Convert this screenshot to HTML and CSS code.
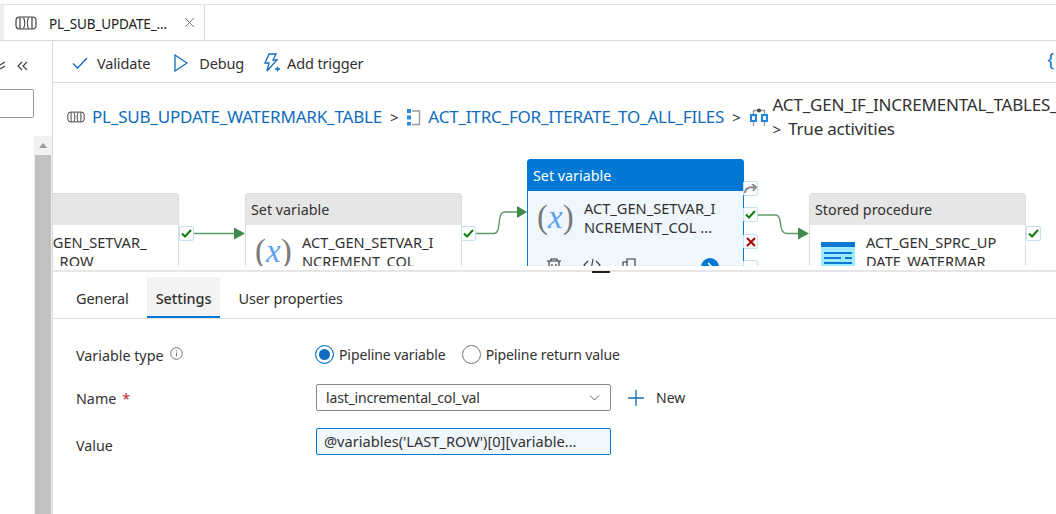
FILE: index.html
```html
<!DOCTYPE html>
<html lang="en">
<head>
    <meta charset="UTF-8">
    <title>PL_SUB_UPDATE_WATERMARK_TABLE</title>
    <link rel="stylesheet" href="styles.css">
</head>
<body>
    <div class="tabbar">
        <div class="tab-sliver"></div>
        <div class="tab">
            <svg class="pipe-icon" width="22" height="14" viewBox="0 0 22 14"><rect x="1" y="1" width="20" height="12" rx="3.500"/><path d="M5 1v12M17 1v12M8.500 1.500c1.500 3 1.500 8 0 11M13.500 1.500c-1.500 3-1.500 8 0 11"/></svg>
            <span class="tab-title">PL_SUB_UPDATE_...</span>
            <svg class="tab-close" width="11" height="11" viewBox="0 0 11 11"><path d="M1 1l9 9M10 1l-9 9"/></svg>
        </div>
    </div>

    <div class="workspace">
        <aside class="side">
            <div class="side-top">
                <svg width="8" height="10" viewBox="0 0 8 10" class="side-cut"><path d="M0 4l5-3M0 8l5-3"/></svg>
                <svg width="11" height="10" viewBox="0 0 11 10" class="side-collapse"><path d="M5 1L1 5l4 4M10 1L6 5l4 4"/></svg>
            </div>
            <div class="side-search"></div>
            <div class="scrollbar">
                <svg width="8" height="5" viewBox="0 0 8 5"><path d="M0 5l4-5 4 5z"/></svg>
                <div class="scroll-thumb"></div>
            </div>
        </aside>

        <main class="main">
            <div class="toolbar">
                <div class="tool">
                    <svg width="16" height="12" viewBox="0 0 16 12"><path d="M1 6.500l4.500 4.500L15 1"/></svg>
                    <span>Validate</span>
                </div>
                <div class="tool tool-debug">
                    <svg width="14" height="18" viewBox="0 0 14 18"><path d="M1 1l12 8L1 17z"/></svg>
                    <span>Debug</span>
                </div>
                <div class="tool tool-trigger">
                    <svg width="17" height="20" viewBox="0 0 17 20"><path d="M6 1h7l-3 6h4L4 18l2-8H2z"/><path d="M12 16h5M14.500 13.500v5"/></svg>
                    <span>Add trigger</span>
                </div>
                <span class="tool-brace">{</span>
            </div>

            <div class="crumbs">
                <svg class="pipe-icon" width="18" height="12" viewBox="0 0 22 14"><rect x="1" y="1" width="20" height="12" rx="3.500"/><path d="M5 1v12M17 1v12M8.500 1.500c1.500 3 1.500 8 0 11M13.500 1.500c-1.500 3-1.500 8 0 11"/></svg>
                <a class="crumb-link">PL_SUB_UPDATE_WATERMARK_TABLE</a>
                <span class="crumb-sep">&gt;</span>
                <svg class="crumb-icon" width="14" height="18" viewBox="0 0 14 18"><path class="blue" d="M0 1h4v4H0zM0 7.500h4v4H0zM0 14h4v3.500H0z"/><path class="grey" d="M5 3h7.500v13.500H5"/></svg>
                <a class="crumb-link">ACT_ITRC_FOR_ITERATE_TO_ALL_FILES</a>
                <span class="crumb-sep">&gt;</span>
                <svg class="crumb-icon crumb-icon-if" width="18" height="20" viewBox="0 0 18 20"><path class="grey" d="M3.500 7V3.500h11V7M3.500 14v5M14.500 14v5"/><circle class="dark" cx="9" cy="3.500" r="2"/><path class="blue" d="M1 8h5v6H1zM12 8h5v6h-5z"/></svg>
                <div class="crumb-last">
                    <div>ACT_GEN_IF_INCREMENTAL_TABLES_</div>
                    <div><span class="crumb-gt">&gt;</span> True activities</div>
                </div>
            </div>

            <div class="canvas">
                <svg class="wires" width="1003" height="116" viewBox="0 0 1003 116">
                    <path d="M141 83.500H185"/><path class="tip" d="M181 77.500l11 6-11 6z"/>
                    <path d="M423 83.500H441C449 83.500 443 62 452 62H466"/><path class="tip" d="M464 56l10 6-10 6z"/>
                    <path d="M705 65H722C731 65 724 83.500 734 83.500H748"/><path class="tip" d="M745 77.500l11 6-11 6z"/>
                </svg>

                <div class="node node-first">
                    <div class="node-head"></div>
                    <div class="node-body"><div class="node-name">ACT_GEN_SETVAR_<br>LAST_ROW</div></div>
                </div>
                <div class="status node1-ok"><svg width="11" height="9" viewBox="0 0 11 9"><path d="M1 4.500l3 3L10 1"/></svg></div>

                <div class="node node-second">
                    <div class="node-head">Set variable</div>
                    <div class="node-body">
                        <div class="var-icon">(<i>x</i>)</div>
                        <div class="node-name">ACT_GEN_SETVAR_I<br>NCREMENT_COL</div>
                    </div>
                </div>
                <div class="status node2-ok"><svg width="11" height="9" viewBox="0 0 11 9"><path d="M1 4.500l3 3L10 1"/></svg></div>

                <div class="node node-active">
                    <div class="node-head">Set variable</div>
                    <div class="node-body">
                        <div class="var-icon">(<i>x</i>)</div>
                        <div class="node-name">ACT_GEN_SETVAR_I<br>NCREMENT_COL ...</div>
                    </div>
                    <div class="node-actions">
                        <svg width="16" height="16" viewBox="0 0 16 16"><path d="M1 3h14M5 3V1h6v2M3 3v12h10V3M6 6v7M10 6v7"/></svg>
                        <svg width="18" height="12" viewBox="0 0 18 12"><path d="M5 3L1 7l4 4M13 3l4 4-4 4M10 1L8 12"/></svg>
                        <svg width="14" height="16" viewBox="0 0 14 16"><path d="M5 1h8v11H5zM5 4H1v11h8v-3"/></svg>
                        <span class="go-btn"><svg width="6" height="10" viewBox="0 0 6 10"><path d="M1 1l4 4-4 4"/></svg></span>
                    </div>
                </div>
                <div class="status node3-skip"><svg width="13" height="9" viewBox="0 0 13 9"><path d="M1 9C1 4 6 2 11 4M8 0l4 3-3 4"/></svg></div>
                <div class="status node3-ok"><svg width="11" height="9" viewBox="0 0 11 9"><path d="M1 4.500l3 3L10 1"/></svg></div>
                <div class="status node3-fail"><svg width="10" height="10" viewBox="0 0 10 10"><path d="M1 1l8 8M9 1l-8 8"/></svg></div>
                <div class="status node3-more"></div>

                <div class="node node-proc">
                    <div class="node-head">Stored procedure</div>
                    <div class="node-body">
                        <svg class="proc-icon" width="34" height="30" viewBox="0 0 34 30"><rect width="34" height="30" fill="#9eeaff"/><rect width="34" height="5" fill="#0a78d4"/><path d="M3 11h28M3 16h17M24 16h7M3 21h28M3 26h10M18 26h13"/></svg>
                        <div class="node-name">ACT_GEN_SPRC_UP<br>DATE_WATERMAR</div>
                    </div>
                </div>
                <div class="status node4-ok"><svg width="11" height="9" viewBox="0 0 11 9"><path d="M1 4.500l3 3L10 1"/></svg></div>
            </div>

            <div class="panel">
                <div class="sizer"></div>
                <div class="panel-tabs">
                    <div class="panel-tab">General</div>
                    <div class="panel-tab active">Settings</div>
                    <div class="panel-tab">User properties</div>
                </div>

                <div class="form">
                    <div class="form-row row-type">
                        <div class="form-label">Variable type
                            <svg class="info" width="13" height="13" viewBox="0 0 13 13"><circle cx="6.500" cy="6.500" r="5.800"/><path d="M6.500 5.500v4M6.500 3.300v1.200"/></svg>
                        </div>
                        <div class="radio-group">
                            <label class="radio checked"><span class="radio-dot"></span>Pipeline variable</label>
                            <label class="radio"><span class="radio-dot"></span>Pipeline return value</label>
                        </div>
                    </div>
                    <div class="form-row row-name">
                        <div class="form-label">Name <span class="req">*</span></div>
                        <div class="select">
                            <span>last_incremental_col_val</span>
                            <svg width="11" height="6" viewBox="0 0 11 6"><path d="M1 .5l4.500 4.500L10 .5"/></svg>
                        </div>
                        <div class="new-btn">
                            <svg width="16" height="16" viewBox="0 0 16 16"><path d="M8 0v16M0 8h16"/></svg>
                            <span>New</span>
                        </div>
                    </div>
                    <div class="form-row row-value">
                        <div class="form-label">Value</div>
                        <div class="value-box">@variables('LAST_ROW')[0][variable...</div>
                    </div>
                </div>
            </div>
        </main>
    </div>
</body>
</html>
```
FILE: styles.css
```css
*{
    padding: 0;
    margin: 0;
    box-sizing: border-box;
    font-family: "Noto Sans", sans-serif;
}
html, body{
    width: 1056px;
    height: 514px;
    overflow: hidden;
    background-color: #fff;
    color: #323130;
}
svg{
    fill: none;
    flex-shrink: 0;
}

/* top tab strip */
.tabbar{
    height: 37px;
    margin-top: 4px;
    display: flex;
    border-top: 1px solid #e4e4e4;
    border-bottom: 1px solid #d9d9d9;
}
.tab-sliver{
    width: 4px;
    background-color: #eee;
}
.tab{
    width: 201px;
    display: flex;
    align-items: center;
    padding-left: 11px;
    border-right: 1px solid #d9d9d9;
}
.pipe-icon rect, .pipe-icon path{
    stroke: #444;
    stroke-width: 1.2;
}
.tab-title{
    margin: 2px 0 0 12px;
    font-size: 13.500px;
    letter-spacing: -.15px;
    color: #222;
    width: 135px;
    white-space: nowrap;
}
.tab-close path{
    stroke: #777;
}

/* left blade */
.workspace{
    display: flex;
    height: 473px;
}
.side{
    width: 53px;
    border-right: 1px solid #d9d9d9;
    display: flex;
    flex-direction: column;
    overflow: hidden;
}
.side-top{
    height: 48px;
    display: flex;
    align-items: center;
    gap: 9px;
    padding-top: 1px;
}
.side-top path{
    stroke: #444;
    stroke-width: 1.2;
}
.side-search{
    width: 34px;
    height: 29px;
    border: 1px solid #999;
    border-left: none;
    border-radius: 0 2px 2px 0;
}
.scrollbar{
    width: 18px;
    margin-left: 34px;
    margin-top: 18px;
    flex: 1;
    background-color: #f1f1f1;
    display: flex;
    flex-direction: column;
    align-items: center;
    padding-top: 7px;
}
.scrollbar svg{
    fill: #999;
}
.scroll-thumb{
    width: 16px;
    flex: 1;
    margin-top: 7px;
    background-color: #c1c1c1;
}

/* main column */
.main{
    flex: 1;
    display: flex;
    flex-direction: column;
    min-width: 0;
}
.toolbar{
    height: 42px;
    border-bottom: 1px solid #d9d9d9;
    display: flex;
    align-items: center;
    padding: 3px 0 0 19px;
    gap: 24px;
    position: relative;
    flex-shrink: 0;
}
.tool{
    display: flex;
    align-items: center;
    gap: 9px;
    font-size: 14.500px;
    letter-spacing: -.15px;
    color: #323130;
}
.tool-debug{
    gap: 11px;
}
.tool-trigger{
    gap: 7px;
    margin-left: -5px;
}
.tool svg path{
    stroke: #0f6cbd;
    stroke-width: 1.3;
}
.tool-brace{
    position: absolute;
    right: 2px;
    top: 6px;
    font-size: 18px;
    color: #0f6cbd;
}

/* breadcrumb */
.crumbs{
    height: 67px;
    display: flex;
    align-items: center;
    padding-left: 14px;
    font-size: 17px;
    letter-spacing: -.2px;
    white-space: nowrap;
    flex-shrink: 0;
}
.crumbs .pipe-icon{
    margin-right: 7px;
}
.crumb-link{
    color: #0f6cbd;
}
.crumb-sep{
    margin: 0 9px 0 8px;
    font-size: 15px;
    color: #333;
}
.crumb-icon .blue{
    fill: #2b8be0;
}
.crumb-icon .grey{
    stroke: #999;
    stroke-width: 1.4;
}
.crumb-icon .dark{
    fill: #444;
}
.crumb-icon{
    margin-right: 7px;
}
.crumb-icon-if{
    margin-right: 5px;
}
.crumb-icon-if .blue{
    fill: #e8f4ff;
    stroke: #1f86e0;
    stroke-width: 2;
}
.crumb-last{
    line-height: 24px;
    color: #323130;
}
.crumb-gt{
    font-size: 15px;
    margin-right: 3px;
}

/* pipeline canvas */
.canvas{
    height: 116px;
    position: relative;
    overflow: hidden;
    flex-shrink: 0;
}
.wires{
    position: absolute;
    left: 0;
    top: 0;
}
.wires path{
    stroke: #5d9a66;
    stroke-width: 1.4;
}
.wires .tip{
    fill: #3f8a4a;
    stroke: none;
}
.node{
    position: absolute;
    width: 217px;
    height: 130px;
    background-color: #fff;
    border: 1px solid #ddd;
    border-radius: 3px 3px 0 0;
}
.node-first{
    left: -91px;
    top: 43px;
}
.node-second{
    left: 192px;
    top: 43px;
}
.node-proc{
    left: 756px;
    top: 43px;
}
.node-active{
    left: 474px;
    top: 9px;
    background-color: #eff6fc;
    border: 1px solid #0078d4;
}
.node-head{
    height: 31px;
    background-color: #e6e6e6;
    font-size: 14.300px;
    padding: 6px 0 0 5px;
    color: #323130;
}
.node-active .node-head{
    background-color: #0078d4;
    color: #fff;
}
.node-body{
    display: flex;
    padding: 8px 0 0 9px;
    gap: 10px;
    height: 67px;
}
.node-first .node-body{
    padding-left: 57px;
}
.node-proc .node-body{
    padding-left: 11px;
    gap: 11px;
}
.node-name{
    font-size: 14.600px;
    line-height: 19px;
    color: #323130;
    white-space: nowrap;
}
.var-icon{
    width: 37px;
    font-family: "Liberation Serif", serif;
    font-size: 33px;
    line-height: 36px;
    color: #7a7a7a;
    white-space: nowrap;
}
.var-icon i{
    font-family: "Liberation Serif", serif;
    color: #5ea0ef;
}
.proc-icon{
    margin-top: 9px;
}
.proc-icon path{
    stroke: #0a78d4;
    stroke-width: 2;
}
.node-actions{
    display: flex;
    align-items: flex-start;
    gap: 21px;
    padding-left: 18px;
}
.node-actions svg path{
    stroke: #333;
    stroke-width: 1.100;
}
.go-btn{
    width: 18px;
    height: 18px;
    margin-left: 44px;
    border-radius: 50%;
    background-color: #0078d4;
    display: flex;
    align-items: center;
    justify-content: center;
}
.node-actions .go-btn svg path{
    stroke: #fff;
    stroke-width: 1.600;
}
.status{
    position: absolute;
    width: 15px;
    height: 15px;
    background-color: #fff;
    border: 1px solid #c7e0f4;
    border-radius: 2px;
    display: flex;
    align-items: center;
    justify-content: center;
}
.status svg path{
    stroke: #107c10;
    stroke-width: 2;
}
.node1-ok{ left: 126px; top: 76px; }
.node2-ok{ left: 408px; top: 76px; }
.node3-skip{ left: 690px; top: 31px; }
.node3-skip svg path{ stroke: #8a8a8a; }
.node3-ok{ left: 690px; top: 57px; }
.node3-fail{ left: 690px; top: 84px; }
.node3-fail svg path{ stroke: #a80000; }
.node3-more{ left: 690px; top: 110px; }
.node4-ok{ left: 973px; top: 76px; }

/* bottom panel */
.panel{
    flex: 1;
    position: relative;
    border-top: 2px solid #e6e6e6;
    margin-top: 4px;
}
.sizer{
    position: absolute;
    left: 539px;
    top: -1px;
    width: 18px;
    height: 2px;
    background-color: #222;
}
.panel-tabs{
    height: 47px;
    display: flex;
    gap: 9px;
    padding: 5px 0 0 14px;
    border-bottom: 1px solid #e1e1e1;
}
.panel-tab{
    height: 41px;
    padding: 0 9px;
    font-size: 14.500px;
    letter-spacing: -.1px;
    line-height: 42px;
    color: #323130;
}
.panel-tab.active{
    background-color: #f3f3f3;
    border-bottom: 2px solid #0078d4;
    font-weight: 500;
}
.form{
    padding: 17px 0 0 23px;
}
.form-row{
    display: flex;
    align-items: center;
}
.form-label{
    width: 240px;
    font-size: 14.300px;
    color: #323130;
    display: flex;
    align-items: flex-start;
    gap: 6px;
}
.info{
    margin-top: 1px;
}
.info circle, .info path{
    stroke: #666;
    stroke-width: .9;
}
.req{
    color: #c4262e;
}
.row-type{
    height: 36px;
}
.row-type .form-label{
    margin-top: 3px;
}
.row-name{
    height: 27px;
    margin-top: 12px;
}
.row-name .form-label{
    margin-top: 1px;
}
.row-value{
    height: 27px;
    margin-top: 17px;
}
.row-value .form-label{
    margin-top: 7px;
}
.radio-group{
    display: flex;
    gap: 16px;
    margin-left: -1px;
}
.radio{
    display: flex;
    align-items: center;
    gap: 5px;
    font-size: 14px;
    letter-spacing: -.1px;
    color: #323130;
}
.radio-dot{
    width: 19px;
    height: 19px;
    border: 1px solid #777;
    border-radius: 50%;
    background-color: #fff;
}
.radio.checked .radio-dot{
    border: 1px solid #0078d4;
    background-color: #0f6cbd;
    box-shadow: inset 0 0 0 3px #fff;
}
.select{
    width: 295px;
    height: 27px;
    border: 1px solid #8a8a8a;
    border-radius: 2px;
    display: flex;
    align-items: center;
    justify-content: space-between;
    padding: 0 10px 0 9px;
    font-size: 14px;
    letter-spacing: -.17px;
}
.select svg path{
    stroke: #666;
}
.new-btn{
    display: flex;
    align-items: center;
    gap: 12px;
    margin-left: 17px;
    font-size: 14px;
}
.new-btn svg path{
    stroke: #0f6cbd;
    stroke-width: 1.300;
}
.value-box{
    width: 295px;
    height: 27px;
    border: 1px solid #0078d4;
    border-radius: 2px;
    background-color: #eff6fc;
    padding: 0 7px;
    font-size: 14.600px;
    line-height: 25px;
    white-space: nowrap;
}
```
